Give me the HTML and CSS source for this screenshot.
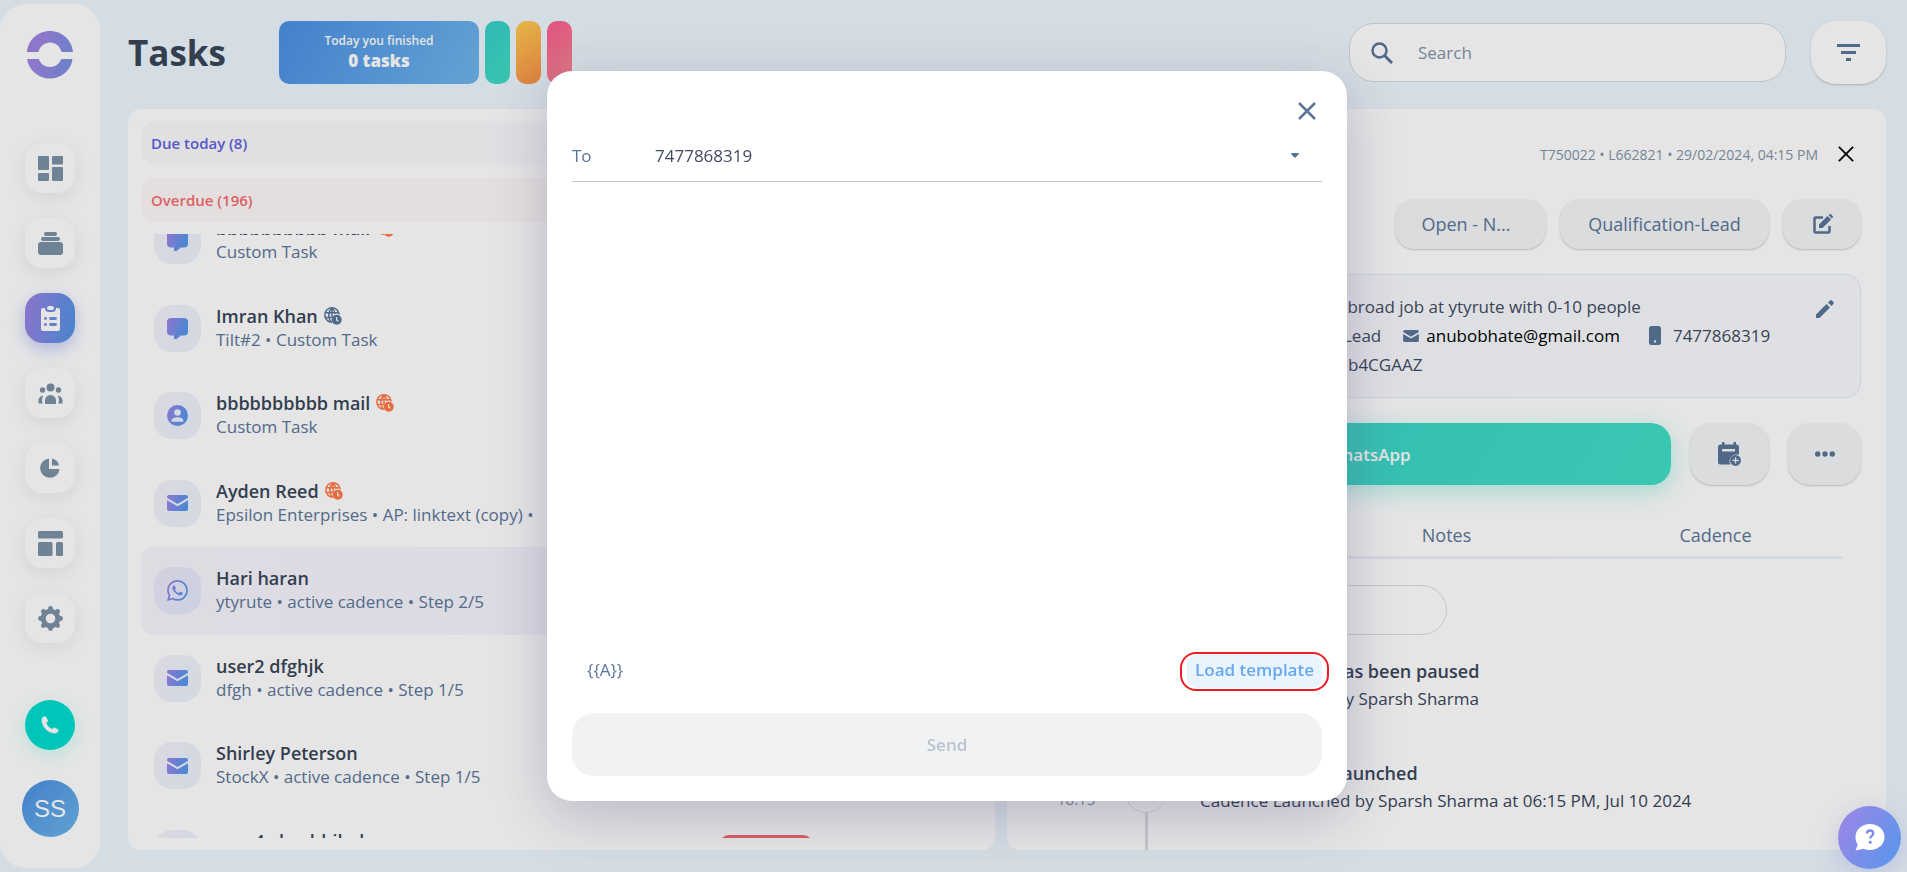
FILE: index.html
```html
<!DOCTYPE html>
<html lang="en">
<head>
  <meta charset="UTF-8">
  <meta name="viewport" content="width=device-width, initial-scale=1.0">
  <title>Tasks</title>
  <link rel="stylesheet" href="styles.css">
</head>
<body>
  <!-- icon sprite -->
  <svg class="sprite" width="0" height="0" aria-hidden="true">
    <defs>
      <linearGradient id="brand" x1="0" y1="0" x2="1" y2="0.3">
        <stop offset="0" stop-color="#a184e6"/>
        <stop offset="1" stop-color="#5597ec"/>
      </linearGradient>
      <linearGradient id="brand-logo" x1="0" y1="0" x2="1" y2="0.3">
        <stop offset="0.3" stop-color="#9f84e2"/>
        <stop offset="1" stop-color="#7f8fe0"/>
      </linearGradient>
      <symbol id="i-mail" viewBox="0 0 21 16">
        <path d="M2 0h17a2 2 0 0 1 2 2v.8L10.500 9 0 2.800V2a2 2 0 0 1 2-2z"/>
        <path d="M0 5.200l10.500 6L21 5.200V14a2 2 0 0 1-2 2H2a2 2 0 0 1-2-2z"/>
      </symbol>
      <symbol id="i-chat" viewBox="0 0 21 21">
        <path d="M4 0h13a4 4 0 0 1 4 4v9.500a4 4 0 0 1-4 4h-3L9.500 21H7v-3.500H4a4 4 0 0 1-4-4V4a4 4 0 0 1 4-4z"/>
      </symbol>
      <symbol id="i-user" viewBox="0 0 21 21">
        <path fill-rule="evenodd" d="M10.500 0a10.500 10.500 0 1 1 0 21 10.500 10.500 0 0 1 0-21zm0 4.200a3.200 3.200 0 1 0 0 6.600 3.200 3.200 0 0 0 0-6.600zM4.500 15.500c0 .8.4 1.200 1.200 1.200h9.600c.8 0 1.200-.4 1.200-1.200 0-2-3-3.300-6-3.300s-6 1.300-6 3.300z"/>
      </symbol>
      <symbol id="i-whatsapp" viewBox="0 0 24 24">
        <path d="M17.472 14.382c-.297-.149-1.758-.867-2.030-.967-.273-.099-.471-.148-.67.150-.197.297-.767.966-.940 1.164-.173.199-.347.223-.644.075-.297-.150-1.255-.463-2.390-1.475-.883-.788-1.480-1.761-1.653-2.059-.173-.297-.018-.458.130-.606.134-.133.298-.347.446-.520.149-.174.198-.298.298-.497.099-.198.050-.371-.025-.520-.075-.149-.669-1.612-.916-2.207-.242-.579-.487-.500-.669-.510-.173-.008-.371-.010-.570-.010-.198 0-.520.074-.792.372-.272.297-1.040 1.016-1.040 2.479 0 1.462 1.065 2.875 1.213 3.074.149.198 2.096 3.200 5.077 4.487.709.306 1.262.489 1.694.625.712.227 1.360.195 1.871.118.571-.085 1.758-.719 2.006-1.413.248-.694.248-1.289.173-1.413-.074-.124-.272-.198-.570-.347m-5.421 7.403h-.004a9.870 9.870 0 0 1-5.031-1.378l-.361-.214-3.741.982.998-3.648-.235-.374a9.860 9.860 0 0 1-1.510-5.260c.001-5.450 4.436-9.884 9.888-9.884 2.640 0 5.122 1.030 6.988 2.898a9.825 9.825 0 0 1 2.893 6.994c-.003 5.450-4.437 9.884-9.885 9.884m8.413-18.297A11.815 11.815 0 0 0 12.050 0C5.495 0 .160 5.335.157 11.892c0 2.096.547 4.142 1.588 5.945L.057 24l6.305-1.654a11.882 11.882 0 0 0 5.683 1.448h.005c6.554 0 11.890-5.335 11.893-11.893a11.821 11.821 0 0 0-3.480-8.413z"/>
      </symbol>
      <symbol id="i-globe" viewBox="0 0 18 18">
        <g fill="none" stroke="currentColor" stroke-width="1.500">
          <path d="M8 15.200A7.200 7.200 0 1 1 15.200 7.500"/>
          <path d="M7.600 15.200C3.800 11.500 3.800 4.500 8 1c1.800 1.500 2.900 3.700 3.200 6M1 5.700h13.800M1 10.500h7M8 1v9"/>
        </g>
        <circle cx="12.700" cy="12.700" r="5" fill="currentColor"/>
        <path d="M12.600 10.300v2.700l1.700 1.200" fill="none" stroke="#fff" stroke-width="1.200"/>
      </symbol>
      <symbol id="i-close" viewBox="0 0 18 18">
        <path d="M1 1l16 16M17 1L1 17" fill="none" stroke="currentColor"/>
      </symbol>
    </defs>
  </svg>

  <nav class="sidebar">
    <a class="logo" href="#" aria-label="Home">
      <svg width="46" height="48" viewBox="0 0 46 48" fill="url(#brand-logo)">
        <path d="M0 21C1 9 11 0 23 0s22 9 23 21H34.500C33 15 28.500 11.500 23 11.500S13 15 11.500 21zM0 28h11.800c1.700 5 6.200 8 11.200 8s9.500-3 11.200-8H45.500C44 39.500 34.500 47.500 23 47.500S2 39.500 0 28z"/>
      </svg>
    </a>
    <ul class="nav">
      <li><a href="#" aria-label="Dashboard"><svg width="25" height="25" viewBox="0 0 25 25"><rect width="11" height="14" rx="1"/><rect x="14" width="11" height="8.500" rx="1"/><rect y="17" width="11" height="8" rx="1"/><rect x="14" y="11" width="11" height="14" rx="1"/></svg></a></li>
      <li><a href="#" aria-label="Leads"><svg width="25" height="25" viewBox="0 0 25 25"><rect x="6" y="1" width="13" height="4" rx="2"/><rect x="3" y="6" width="19" height="4" rx="2"/><rect y="11" width="25" height="13" rx="3"/></svg></a></li>
      <li><a class="active" href="#" aria-label="Tasks"><svg width="19" height="25" viewBox="0 0 19 25"><path fill-rule="evenodd" d="M2 2h2c0 2.500 1.500 4 3.500 4h4C13.500 6 15 4.500 15 2h2a2 2 0 0 1 2 2v19a2 2 0 0 1-2 2H2a2 2 0 0 1-2-2V4a2 2 0 0 1 2-2zM4.500 11a1.400 1.400 0 1 0 0 2.900 1.400 1.400 0 0 0 0-2.900zM9.500 11a1.400 1.400 0 1 0 0 2.900h5a1.400 1.400 0 1 0 0-2.900zM4.500 17a1.400 1.400 0 1 0 0 2.900 1.400 1.400 0 0 0 0-2.900zM9.500 17a1.400 1.400 0 1 0 0 2.900h5a1.400 1.400 0 1 0 0-2.900z"/><rect x="6" width="7" height="4" rx="2"/></svg></a></li>
      <li><a href="#" aria-label="People"><svg width="25" height="25" viewBox="0 0 25 25"><circle cx="12.500" cy="6.500" r="4"/><circle cx="4.500" cy="9" r="2.700"/><circle cx="20.500" cy="9" r="2.700"/><path d="M7 23v-3.500a5.500 5.500 0 0 1 11 0V23zM.5 22.500V19a4.500 4.500 0 0 1 4.700-4.300A9 9 0 0 0 4.700 22.500zM24.500 22.500V19a4.500 4.500 0 0 0-4.700-4.300 9 9 0 0 1 .5 7.800z"/></svg></a></li>
      <li><a href="#" aria-label="Reports"><svg width="20" height="20" viewBox="0 0 20 20"><path d="M9 .5V11h10.500A9.700 9.700 0 1 1 9 .5z"/><path d="M12 .5A9 9 0 0 1 19 7.500h-7z"/></svg></a></li>
      <li><a href="#" aria-label="Templates"><svg width="25" height="25" viewBox="0 0 25 25"><rect width="25" height="7.500" rx="1.500"/><rect y="11" width="14.500" height="14" rx="1.500"/><rect x="18" y="11" width="7" height="14" rx="1.500"/></svg></a></li>
      <li><a href="#" aria-label="Settings"><svg width="25" height="25" viewBox="0 0 25 25"><circle class="gear-ring" cx="12.500" cy="12.500" r="7.300"/><circle cx="12.500" cy="2.500" r="2.400"/><circle cx="19.600" cy="5.400" r="2.400"/><circle cx="22.500" cy="12.500" r="2.400"/><circle cx="19.600" cy="19.600" r="2.400"/><circle cx="12.500" cy="22.500" r="2.400"/><circle cx="5.400" cy="19.600" r="2.400"/><circle cx="2.500" cy="12.500" r="2.400"/><circle cx="5.400" cy="5.400" r="2.400"/></svg></a></li>
    </ul>
    <button class="call-btn" type="button" aria-label="Call">
      <svg width="18" height="18" viewBox="0 0 18 18"><path d="M3.500.3C1.500 1 .2 2.500.6 5 1.600 11.500 6.500 16.500 13 17.400c2.300.2 3.800-1 4.500-2.700.2-.6 0-1-.5-1.300l-3-1.700c-.6-.3-1.100-.2-1.500.2l-1.300 1.200C8.500 12 6.500 9.800 5.300 7L6.600 5.600c.4-.4.4-.9.2-1.400L5.200.9C4.800.3 4.200 0 3.500.3z"/></svg>
    </button>
    <a class="avatar" href="#">SS</a>
  </nav>

  <main class="main">
    <header class="header">
      <h1>Tasks</h1>
      <div class="stats">
        <div class="stat stat-finished">
          <span>Today you finished</span>
          <strong>0 tasks</strong>
        </div>
        <div class="stat stat-green"></div>
        <div class="stat stat-yellow"></div>
        <div class="stat stat-pink"></div>
      </div>
      <label class="search">
        <svg width="22" height="22" viewBox="0 0 22 22" fill="none" stroke="#5b7599"><circle cx="8.500" cy="8.500" r="7" stroke-width="2.500"/><path d="M13.500 13.500l7.500 7.500" stroke-width="3"/></svg>
        <input type="search" placeholder="Search" aria-label="Search">
      </label>
      <button class="filter-btn" type="button" aria-label="Filter">
        <svg width="23" height="17" viewBox="0 0 23 17" fill="#5b7599"><rect width="23" height="3"/><rect x="4" y="7" width="15" height="3"/><rect x="9" y="14" width="5" height="3"/></svg>
      </button>
    </header>

    <div class="panels">
      <section class="panel task-panel">
        <button class="group group-today" type="button">Due today (8)</button>
        <button class="group group-overdue" type="button">Overdue (196)</button>
        <div class="task-scroll">
          <ul class="task-list">
            <li class="task">
              <span class="task-icon"><svg width="21" height="21"><use href="#i-chat"/></svg></span>
              <div class="task-text"><h3>bbbbbbbbbb mail <svg class="globe late" width="18" height="18"><use href="#i-globe"/></svg></h3><p>Custom Task</p></div>
            </li>
            <li class="task">
              <span class="task-icon"><svg width="21" height="21"><use href="#i-chat"/></svg></span>
              <div class="task-text"><h3>Imran Khan <svg class="globe" width="18" height="18"><use href="#i-globe"/></svg></h3><p>Tilt#2 • Custom Task</p></div>
            </li>
            <li class="task">
              <span class="task-icon"><svg width="21" height="21"><use href="#i-user"/></svg></span>
              <div class="task-text"><h3>bbbbbbbbbb mail <svg class="globe late" width="18" height="18"><use href="#i-globe"/></svg></h3><p>Custom Task</p></div>
            </li>
            <li class="task">
              <span class="task-icon"><svg width="21" height="16"><use href="#i-mail"/></svg></span>
              <div class="task-text"><h3>Ayden Reed <svg class="globe late" width="18" height="18"><use href="#i-globe"/></svg></h3><p>Epsilon Enterprises • AP: linktext (copy) •</p></div>
            </li>
            <li class="task selected">
              <span class="task-icon"><svg width="21" height="21"><use href="#i-whatsapp"/></svg></span>
              <div class="task-text"><h3>Hari haran</h3><p>ytyrute • active cadence • Step 2/5</p></div>
            </li>
            <li class="task">
              <span class="task-icon"><svg width="21" height="16"><use href="#i-mail"/></svg></span>
              <div class="task-text"><h3>user2 dfghjk</h3><p>dfgh • active cadence • Step 1/5</p></div>
            </li>
            <li class="task">
              <span class="task-icon"><svg width="21" height="16"><use href="#i-mail"/></svg></span>
              <div class="task-text"><h3>Shirley Peterson</h3><p>StockX • active cadence • Step 1/5</p></div>
            </li>
            <li class="task">
              <span class="task-icon"><svg width="21" height="16"><use href="#i-mail"/></svg></span>
              <div class="task-text"><h3>user4 vbvghhjknl</h3><p>active cadence</p></div>
              <span class="tag">Overdue</span>
            </li>
          </ul>
        </div>
      </section>

      <section class="panel detail-panel">
        <div class="meta">
          <span>T750022 • L662821 • 29/02/2024, 04:15 PM</span>
          <button class="icon-btn" type="button" aria-label="Close lead"><svg width="16" height="16" stroke-width="2"><use href="#i-close"/></svg></button>
        </div>
        <div class="lead-actions">
          <button class="chip chip-status" type="button">Open - N...</button>
          <button class="chip chip-stage" type="button">Qualification-Lead</button>
          <button class="chip chip-edit" type="button" aria-label="Edit stage">
            <svg width="21" height="21" viewBox="0 0 21 21"><path d="M11 3.500H3.500a1 1 0 0 0-1 1v13a1 1 0 0 0 1 1h13a1 1 0 0 0 1-1V12" fill="none" stroke="currentColor" stroke-width="2.500"/><path d="M7 10.500L15.500 2l3.500 3.500-8.500 8.500H7zM16.500 1l1-.7c.5-.4 1-.4 1.500 0L20.700 2c.4.5.4 1 0 1.500l-.9 1z" fill="currentColor"/></svg>
          </button>
        </div>
        <div class="lead-card">
          <div class="lead-info">
            <p class="lead-job">abroad job at ytyrute with 0-10 people</p>
            <p class="lead-contact">
              <span>Lead</span>
              <svg class="mail" width="16" height="12"><use href="#i-mail"/></svg>
              <a href="mailto:anubobhate@gmail.com">anubobhate@gmail.com</a>
              <svg class="phone" width="12" height="19" viewBox="0 0 12 19"><path fill-rule="evenodd" d="M2.500 0h7A2.500 2.500 0 0 1 12 2.500v14A2.500 2.500 0 0 1 9.500 19h-7A2.500 2.500 0 0 1 0 16.500v-14A2.500 2.500 0 0 1 2.500 0zM6 14.200a1.200 1.200 0 1 0 0 2.400 1.200 1.200 0 0 0 0-2.400z"/></svg>
              <span>7477868319</span>
            </p>
            <p class="lead-id">b4CGAAZ</p>
          </div>
          <button class="icon-btn pencil" type="button" aria-label="Edit lead">
            <svg width="18" height="18" viewBox="0 0 18 18"><path d="M0 14.500L10.500 4 14 7.500 3.500 18H0zM12 2.500L14 .6c.6-.6 1.400-.6 2 0L17.400 2c.6.6.6 1.400 0 2l-2 2z" fill="currentColor"/></svg>
          </button>
        </div>
        <div class="cta-row">
          <button class="whatsapp-btn" type="button"><svg width="22" height="22"><use href="#i-whatsapp"/></svg>WhatsApp</button>
          <button class="square-btn schedule" type="button" aria-label="Schedule">
            <svg width="23" height="24" viewBox="0 0 23 24"><path fill-rule="evenodd" d="M4 0h2.500v2.500h9V0H18v2.500h.5A2.500 2.500 0 0 1 21 5v7.500h-3c-4 .5-6 3-6.500 6 0 1.500.5 3 1 4H2.500A2.500 2.500 0 0 1 0 20V5a2.500 2.500 0 0 1 2.500-2.500H4zM4 7v2.500h13V7z"/><path fill-rule="evenodd" d="M17.500 13a5.400 5.400 0 1 1 0 10.900 5.400 5.400 0 0 1 0-10.900zm-.6 2.300v2.500h-2.500V19h2.500v2.500h1.300V19h2.500v-1.200h-2.500v-2.500z"/></svg>
          </button>
          <button class="square-btn more" type="button" aria-label="More">
            <svg width="20" height="6" viewBox="0 0 20 6"><circle cx="2.700" cy="3" r="2.700"/><circle cx="10" cy="3" r="2.700"/><circle cx="17.300" cy="3" r="2.700"/></svg>
          </button>
        </div>
        <div class="tabs">
          <button type="button">Activity</button>
          <button type="button">Notes</button>
          <button type="button">Cadence</button>
        </div>
        <hr class="tab-line">
        <select class="activity-filter" aria-label="Activity type"><option></option></select>
        <ol class="timeline">
          <li>
            <time>18:16</time>
            <span class="rail"></span>
            <div><h4>active cadence has been paused</h4><p>Cadence Paused by Sparsh Sharma</p></div>
          </li>
          <li>
            <time>18:15</time>
            <span class="rail"></span>
            <div><h4>active cadence Launched</h4><p>Cadence Launched by Sparsh Sharma at 06:15 PM, Jul 10 2024</p></div>
          </li>
        </ol>
      </section>
    </div>
  </main>

  <div class="overlay">
    <form class="modal" role="dialog" aria-label="Send message">
      <button class="icon-btn modal-close" type="button" aria-label="Close"><svg width="18" height="18" stroke-width="2.500"><use href="#i-close"/></svg></button>
      <div class="to-row">
        <label for="to">To</label>
        <select id="to"><option>7477868319</option></select>
        <svg class="caret" width="8" height="5" viewBox="0 0 8 5"><path d="M0 1q0-1 1-1h6q1 0 1 1L4 5z"/></svg>
      </div>
      <textarea class="message" aria-label="Message"></textarea>
      <div class="tools">
        <button class="variable" type="button">{{A}}</button>
        <div class="highlight"><button class="template" type="button">Load template</button></div>
      </div>
      <button class="send" type="submit" disabled>Send</button>
    </form>
  </div>

  <button class="help" type="button" aria-label="Help">
    <svg width="30" height="27" viewBox="0 0 30 27"><path fill="#fff" d="M15 0c8 0 14.500 5.500 14.500 13S23 26 15 26c-2.500 0-4.500-.5-6.500-1.300L.5 26.500l2.300-6C1.300 18.500.5 16 .5 13 .5 5.500 7 0 15 0z"/><path d="M12 9.500c0-2 1.300-3 3-3s3.200 1 3.200 2.900c0 2.300-3 2.500-3 5.100" fill="none" stroke="#7f8de8" stroke-width="2.300"/><circle cx="15.200" cy="18.300" r="1.500" fill="#7f8de8"/></svg>
  </button>
</body>
</html>
```
FILE: styles.css
```css
* { box-sizing: border-box; }
body { margin: 0; height: 100vh; display: flex; overflow: hidden; background: #edf6fd; font-family: "Open Sans", "Noto Sans", sans-serif; font-size: 17px; color: #394659; }
h1, h3, h4, p, ul, ol { margin: 0; padding: 0; }
ul, ol { list-style: none; }
button, input, select, textarea { font: inherit; color: inherit; border: none; background: none; padding: 0; outline: none; }
button { cursor: pointer; }
a { color: inherit; text-decoration: none; }
svg { flex: none; }
button svg { display: block; margin: 0 auto; }
.sprite { position: absolute; }
.icon-btn { display: flex; align-items: center; justify-content: center; width: 30px; height: 30px; }

/* sidebar */
.sidebar { width: 100px; flex: none; margin: 4px 0; padding: 27px 0 31px; background: #fff; border-radius: 26px; display: flex; flex-direction: column; align-items: center; }
.logo { height: 48px; }
.nav { margin-top: 64px; display: flex; flex-direction: column; gap: 25px; }
.nav a { width: 50px; height: 50px; border-radius: 18px; background: #fff; box-shadow: 0 5px 20px rgba(0,0,0,0.08); display: flex; align-items: center; justify-content: center; }
.nav svg { fill: #7d92a6; }
.nav .gear-ring { fill: none; stroke: #7d92a6; stroke-width: 5; }
.nav .active { background: linear-gradient(100deg, #9c82e3, #5094e6); box-shadow: 0 6px 16px rgba(110,130,230,0.4); }
.nav .active svg { fill: #fff; }
.call-btn { width: 50px; height: 50px; margin-top: auto; border-radius: 50%; background: #00ddd0; box-shadow: 0 5px 20px rgba(0,221,190,0.2); display: flex; align-items: center; justify-content: center; }
.call-btn svg { fill: #fff; }
.avatar { width: 57px; height: 57px; margin-top: 30px; border-radius: 50%; background: linear-gradient(135deg, #4b8fe3, #6cb6ea); color: #fff; font: 24px/57px "Liberation Sans", Arial, sans-serif; text-align: center; }

/* header */
.main { flex: 1; min-width: 0; display: flex; flex-direction: column; padding: 21px 21px 22px 28px; }
.header { display: flex; align-items: center; height: 63px; margin-bottom: 25px; }
h1 { width: 151px; font-size: 35px; font-weight: 700; }
.stats { display: flex; gap: 6px; }
.stat { width: 25px; height: 63px; border-radius: 10px; }
.stat-finished { width: 200px; background: linear-gradient(120deg, #4b8fe3, #6fb5ec); color: #fff; display: flex; flex-direction: column; align-items: center; justify-content: center; font-size: 12px; line-height: 17px; font-weight: 600; }
.stat-finished strong { font-size: 17px; line-height: 24px; }
.stat-green { background: linear-gradient(135deg, #36cfca, #41dcc3); }
.stat-yellow { background: linear-gradient(150deg, #ffcb4f, #f88f45); }
.stat-pink { background: linear-gradient(135deg, #fb5c8e, #f5888f); }
.search { width: 437px; height: 59px; margin-left: auto; border: 1px solid #d6dade; border-radius: 25px; background: #fff; display: flex; align-items: center; padding-left: 21px; }
.search input { flex: 1; min-width: 0; margin-left: 25px; }
.search input::placeholder { color: #8395a7; }
.filter-btn { width: 75px; height: 63px; margin-left: 25px; border-radius: 25px; background: #fff; box-shadow: 0 1px 2px rgba(0,0,0,0.2); }

/* task list */
.panels { flex: 1; min-height: 0; display: grid; grid-template-columns: 867fr 879fr; gap: 12px; }
.panel { min-width: 0; min-height: 0; background: #fff; border-radius: 13px; overflow: hidden; display: flex; flex-direction: column; }
.task-panel { padding: 12px 13px; }
.group { height: 44px; flex: none; margin-bottom: 13px; padding-left: 10px; border-radius: 15px; text-align: left; font-size: 15px; font-weight: 600; }
.group-today { background: #fafafd; color: #5f62dc; }
.group-overdue { background: #fef9f8; color: #f56c70; margin-bottom: 12px; }
.task-scroll { flex: 1; min-height: 0; overflow: hidden; }
/* list is scrolled part way into its first row */
.task-list { height: 700px; margin-top: -37px; display: grid; grid-auto-rows: 1fr; }
.task { display: flex; align-items: center; padding-left: 13px; border-radius: 13px; }
.task.selected { background: linear-gradient(90deg, #f7f5fd, #f1f3fd); }
.task-icon { width: 47px; height: 47px; flex: none; margin-right: 15px; border-radius: 18px; background: linear-gradient(120deg, rgba(150,120,220,0.1), rgba(80,147,230,0.12)); display: flex; align-items: center; justify-content: center; }
.task-icon svg { fill: url(#brand); }
.task-text { padding-bottom: 2px; white-space: nowrap; }
.task h3 { display: flex; align-items: center; gap: 6px; font-size: 18px; line-height: 24px; font-weight: 600; }
.task p { line-height: 23px; color: #5d769a; }
.globe { color: #5b7599; }
.globe.late { color: #ff7849; }
.tag { flex: none; width: 94px; height: 36px; margin: 0 169px 0 auto; border-radius: 10px; background: #f5686c; color: #fff; font-size: 14px; line-height: 36px; text-align: center; }

/* lead details */
.detail-panel { padding: 25px 25px 0; }
.meta { flex: none; height: 40px; margin-bottom: 25px; display: flex; align-items: center; justify-content: flex-end; gap: 13px; font-size: 14px; color: #8395a7; }
.meta .icon-btn { color: #000; }
.lead-actions { display: flex; justify-content: flex-end; gap: 14px; margin-bottom: 25px; }
.chip, .square-btn { background: #f3f5f7; color: #5b7599; box-shadow: 0 1px 2px rgba(0,0,0,0.2); }
.chip { height: 50px; border-radius: 20px; font-size: 18px; font-weight: 500; text-align: center; }
.chip-status { width: 151px; padding-right: 9px; }
.chip-stage { width: 209px; }
.chip-edit { width: 78px; }
.lead-card { flex: none; height: 124px; margin-bottom: 25px; padding: 17px 12px; border: 1px solid #e2ecf8; border-radius: 15px; background: linear-gradient(90deg, #f8f8fe, #f8fafd); display: flex; justify-content: space-between; }
.lead-info { line-height: 29px; color: #414b60; white-space: nowrap; }
.lead-job { margin-left: 293px; }
.lead-contact { display: flex; align-items: center; margin-left: 298px; }
.lead-contact svg { fill: #5b7599; }
.lead-contact a { color: #000; }
.lead-contact .mail { margin: 0 7px 0 22px; }
.lead-contact .phone { margin: 0 12px 0 29px; }
.lead-id { margin-left: 303px; }
.pencil { color: #5b7599; margin: 2px 8px 0 0; }
.cta-row { display: flex; gap: 19px; }
.whatsapp-btn { flex: 1; height: 62px; border-radius: 20px; background: linear-gradient(120deg, #37cbc6, #41dfc7); box-shadow: 0 6px 25px rgba(65,223,199,0.4); color: #fff; font-weight: 600; display: flex; align-items: center; justify-content: center; gap: 12px; }
.whatsapp-btn svg { margin: 0; fill: #fff; }
.square-btn { height: 62px; border-radius: 22px; }
.square-btn svg { fill: #5b7599; }
.schedule { width: 79px; }
.more { width: 73px; }
.tabs { flex: none; display: flex; height: 42px; margin: 29px 11px 0; }
.tabs button { flex: 1; font-size: 18px; font-weight: 500; color: #5d769a; }
.tab-line { flex: none; width: auto; height: 3px; margin: 0 18px; border: none; border-radius: 2px; background: linear-gradient(90deg, #efebfa, #ecf4fd); }
.activity-filter { flex: none; width: 317px; height: 50px; margin: 26px 0 22px 98px; border: 1px solid #dcdcdc; border-radius: 25px; appearance: none; }
.timeline li { display: flex; min-height: 102px; line-height: 28px; white-space: nowrap; }
.timeline time { width: 69px; padding: 26px 0 0 25px; flex: none; font-size: 15px; color: #8395a7; }
.rail { width: 40px; margin: 12px 34px 0 25px; display: flex; flex-direction: column; align-items: center; flex: none; }
.rail::before { content: ""; width: 40px; height: 40px; border: 1px solid #e4e6ea; border-radius: 50%; }
.rail::after { content: ""; width: 3px; flex: 1; background: #dadde2; }
.timeline h4 { font-size: 18px; font-weight: 600; }

/* message modal */
.overlay { position: fixed; inset: 0; z-index: 10; padding-right: 13px; background: rgba(0,0,0,0.1); display: flex; align-items: center; justify-content: center; }
.modal { width: 800px; height: 730px; padding: 25px; background: #fff; border-radius: 25px; box-shadow: 0 15px 60px rgba(80,70,120,0.3); display: flex; flex-direction: column; }
.modal-close { align-self: flex-end; color: #5b7599; }
.to-row { flex: none; display: flex; align-items: center; height: 56px; padding-top: 4px; border-bottom: 1px solid #b9c8d3; color: #5b7599; }
.to-row label { width: 83px; }
.to-row select { flex: 1; height: 30px; appearance: none; color: #414b60; }
.to-row .caret { margin-right: 23px; fill: #5b7599; pointer-events: none; }
.message { flex: 1; resize: none; }
.tools { flex: none; display: flex; justify-content: space-between; align-items: center; height: 39px; margin-bottom: 22px; color: #5b7599; }
.variable { margin-left: 15px; padding-bottom: 4px; }
.highlight { padding: 1px 5px; margin-right: -7px; border: 2px solid #ed1c24; border-radius: 16px; }
.template { display: block; height: 33px; padding: 0 8px 4px; border-radius: 10px; background: #eaf4ff; color: #66a9ee; font-weight: 600; }
.send { height: 63px; flex: none; border-radius: 22px; background: #f0f2f4; color: #b8c3d0; font-weight: 600; }

.help { position: fixed; right: 6px; bottom: 3px; z-index: 20; width: 63px; height: 63px; border-radius: 50%; background: linear-gradient(120deg, #a085e6, #5597ec); box-shadow: 0 5px 25px rgba(130,130,220,0.3); display: flex; align-items: center; justify-content: center; }
```
